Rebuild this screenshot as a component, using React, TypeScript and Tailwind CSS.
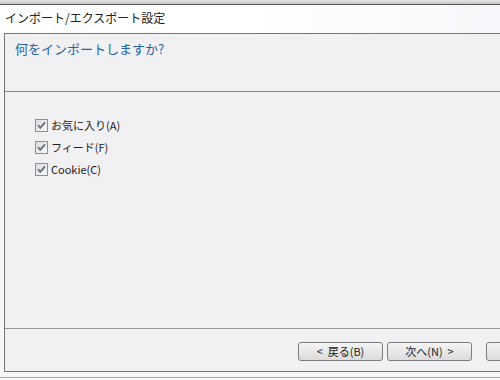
import React from 'react';

const CheckBox = () => (
  <svg width="13" height="13" viewBox="0 0 13 13" className="shrink-0">
    <defs>
      <linearGradient id="cbg" x1="0" y1="0" x2="1" y2="1">
        <stop offset="0" stopColor="#dcdcdc" />
        <stop offset="1" stopColor="#fafafa" />
      </linearGradient>
    </defs>
    <rect x="0.5" y="0.5" width="12" height="12" fill="url(#cbg)" stroke="#8f8f8f" />
    <path d="M3 6.2 L5.3 8.8 L10 3.4" fill="none" stroke="#6a7486" strokeWidth="2" />
  </svg>
);

const items = ['お気に入り(A)', 'フィード(F)', 'Cookie(C)'];

const WizButton = ({ label }: { label: string }) => (
  <button className="w-[85px] h-[19px] rounded-[3px] border border-[#7d7d7d] bg-gradient-to-b from-[#f4f4f4] to-[#dcdcdc] text-[11px] text-[#222] leading-none flex items-center justify-center shrink-0 whitespace-pre">
    {label}
  </button>
);

export default function App() {
  return (
    <div
      className="w-[500px] h-[380px] overflow-hidden bg-[#f7f7f7] flex flex-col"
      style={{ fontFamily: '"Noto Sans CJK JP", "Liberation Sans", sans-serif' }}
    >
      <div className="h-[4px] bg-gradient-to-b from-[#e4e4e4] to-[#c8c8c8] shrink-0" />
      <div className="h-[29px] border-t border-[#555] bg-gradient-to-r from-white via-white to-[#f7f6fa] pl-[5px] pt-[6px] text-[12px] leading-[14px] text-[#222] shrink-0">
        インポート/エクスポート設定
      </div>
      <div className="ml-[4px] h-[339px] border-l border-t border-b border-[#777] bg-[#f1f0f2] flex flex-col shrink-0">
        <div className="h-[58px] border-b border-[#8a8a8a] pl-[10px] pt-[7px] text-[13px] leading-[16px] text-[#2a62a0] shrink-0">
          何をインポートしますか?
        </div>
        <div className="flex-1 flex flex-col gap-[9px] pl-[30px] pt-[27px]">
          {items.map((t) => (
            <div key={t} className="flex items-center gap-[3px] h-[13px]">
              <CheckBox />
              <span className="text-[11px] leading-none text-[#222]">{t}</span>
            </div>
          ))}
        </div>
        <div className="h-[43px] border-t border-[#999] flex items-start pt-[13px] pl-[293px] gap-[4px] shrink-0">
          <WizButton label="<  戻る(B)" />
          <WizButton label="次へ(N)  >" />
          <div className="ml-[10px]">
            <WizButton label="" />
          </div>
        </div>
      </div>
      <div className="h-[5px] shrink-0" />
      <div className="border-t border-[#a8a8a8]" />
    </div>
  );
}
